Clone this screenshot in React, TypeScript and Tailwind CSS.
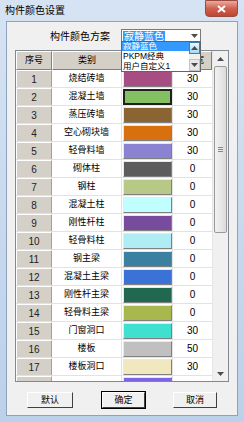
const FONT = { fontFamily: '"Liberation Sans", "Noto Sans CJK SC", sans-serif' };

const rows: [string, string, number | string][] = [
  ['烧结砖墙', '#a84d84', 30],
  ['混凝土墙', '#84c062', 30],
  ['蒸压砖墙', '#8a6432', 30],
  ['空心砌块墙', '#d9700e', 30],
  ['轻骨料墙', '#8c82d2', 30],
  ['砌体柱', '#5c5c5c', 0],
  ['钢柱', '#b8c886', 0],
  ['混凝土柱', '#c0ffff', 0],
  ['刚性杆柱', '#784c9c', 0],
  ['轻骨料柱', '#b0ecf4', 0],
  ['钢主梁', '#3a80a0', 0],
  ['混凝土主梁', '#3a72d8', 0],
  ['刚性杆主梁', '#206850', 0],
  ['轻骨料主梁', '#a8b84e', 0],
  ['门窗洞口', '#40e0d0', 30],
  ['楼板', '#c0c0c0', 50],
  ['楼板洞口', '#f2e8c0', 30],
  ['', '#7c64e4', ''],
];

function Arrow({ up }: { up?: boolean }) {
  return (
    <svg width="7" height="4" viewBox="0 0 7 4">
      <path d={up ? 'M0 4 L3.5 0 L7 4 Z' : 'M0 0 L3.5 4 L7 0 Z'} fill="#4d4d4d" />
    </svg>
  );
}

function HeadCell({ w, children }: { w: string; children?: React.ReactNode }) {
  return (
    <div className={`${w} h-full flex items-center justify-center bg-[#d4d0c8] border-t border-l border-t-white border-l-white border-r border-b border-r-[#808080] border-b-[#808080] text-[9px] text-black`}>
      {children}
    </div>
  );
}

function Btn({ w, label, focus }: { w: string; label: string; focus?: boolean }) {
  return (
    <button className={`${w} h-[16px] flex items-center justify-center text-[9px] leading-none text-black bg-[#f0f0f0] border border-t-white border-l-white border-r-[#404040] border-b-[#404040] ${focus ? 'outline outline-1 outline-black' : ''}`}>
      {label}
    </button>
  );
}

export default function App() {
  return (
    <div style={FONT} className="w-[244px] h-[422px] relative bg-gradient-to-b from-[#d6e3f3] to-[#bcd0ea] overflow-hidden">
      {/* Title bar */}
      <div className="h-[21px] flex items-center pl-[5px] text-[10px] text-black">构件颜色设置</div>
      <div className="absolute right-[6px] top-0 w-[33px] h-[17px] rounded-b-[4px] border border-[#9a4a3e] bg-gradient-to-b from-[#eaaa9e] via-[#d0604f] to-[#c04530] flex items-center justify-center">
        <svg width="9" height="8" viewBox="0 0 9 8">
          <path d="M1 1 L8 7 M8 1 L1 7" stroke="#ffffff" strokeWidth="2" />
        </svg>
      </div>

      {/* Client area */}
      <div className="mx-[6px] h-[395px] bg-[#f0f0f0] border border-[#8da2bd] relative">
        <div className="h-[28px] flex items-center">
          <span className="ml-[43px] w-[71px] text-[10px] text-black">构件颜色方案</span>
          <div className="w-[80px] h-[14px] bg-white border border-[#7a7a7a] flex items-center pl-[1px]">
            <span className="bg-[#3399ff] text-white text-[10px] leading-[11px] px-[1px]">寂静蓝色</span>
            <div className="ml-auto mr-[2px]">
              <Arrow />
            </div>
          </div>
        </div>

        {/* Table */}
        <div className="ml-[8px] w-[214px] h-[332px] border border-[#828790] bg-white flex">
          <div className="w-[196px] flex flex-col overflow-hidden">
            <div className="h-[19px] shrink-0 flex">
              <HeadCell w="w-[36px]">序号</HeadCell>
              <HeadCell w="w-[70px]">类别</HeadCell>
              <HeadCell w="w-[51px]" />
              <HeadCell w="w-[39px]">
                <span className="pl-[14px]">宽</span>
              </HeadCell>
            </div>
            {rows.map(([name, color, width], i) => (
              <div key={i} className="h-[18px] shrink-0 flex border-b border-[#e2e2e2]">
                <div className="w-[36px] h-full flex items-center justify-center bg-[#d4d0c8] border-t border-l border-t-white border-l-white border-r border-r-[#a0a0a0] text-[10px] text-[#222]">
                  {name ? i + 1 : ''}
                </div>
                <div className="w-[70px] h-full flex items-center justify-center text-[9px] text-black border-r border-[#e2e2e2]">
                  {name}
                </div>
                <div className="w-[51px] h-full flex items-center justify-center border-r border-[#e2e2e2]">
                  <div
                    className={`w-[49px] h-[16px] ${i === 1 ? 'border-2 border-[#202020]' : 'border border-t-[#e8e8e8] border-l-[#e8e8e8] border-r-[#808080] border-b-[#808080]'}`}
                    style={{ backgroundColor: color }}
                  />
                </div>
                <div className="w-[39px] h-full flex items-center justify-center text-[10px] text-black">{width}</div>
              </div>
            ))}
          </div>
          {/* Scrollbar */}
          <div className="w-[16px] h-full bg-[#f0f0f0] border-l border-[#e6e6e6] flex flex-col items-center">
            <div className="h-[15px] w-full flex items-center justify-center">
              <Arrow up />
            </div>
            <div className="w-[13px] h-[167px] rounded-[2px] border border-[#9a9a9a] bg-gradient-to-r from-[#f2f2f2] to-[#dcdcdc] flex flex-col items-center justify-center gap-[1px]">
              <div className="w-[5px] h-px bg-[#888]" />
              <div className="w-[5px] h-px bg-[#888]" />
              <div className="w-[5px] h-px bg-[#888]" />
            </div>
            <div className="flex-1" />
            <div className="h-[15px] w-full flex items-center justify-center">
              <Arrow />
            </div>
          </div>
        </div>

        {/* Buttons */}
        <div className="mt-[10px] flex">
          <div className="ml-[20px]"><Btn w="w-[46px]" label="默认" /></div>
          <div className="ml-[29px]"><Btn w="w-[43px]" label="确定" focus /></div>
          <div className="ml-[28px]"><Btn w="w-[44px]" label="取消" /></div>
        </div>

        {/* Dropdown list */}
        <div className="absolute left-[114px] top-[19px] w-[80px] h-[31px] bg-white border border-[#646464] flex">
          <div className="flex-1 flex flex-col text-[8.5px] text-black overflow-hidden">
            <div className="h-[9px] leading-[9px] bg-[#3399ff] text-white pl-[1px]">寂静蓝色</div>
            <div className="h-[10px] leading-[10px] pl-[1px]">PKPM经典</div>
            <div className="h-[10px] leading-[10px] pl-[1px]">用户自定义1</div>
          </div>
          <div className="w-[11px] flex flex-col bg-[#f0f0f0]">
            <div className="h-[12px] border border-[#3c7fb1] bg-gradient-to-b from-[#eaf6fd] to-[#a7d9f5] flex items-center justify-center">
              <Arrow up />
            </div>
            <div className="flex-1" />
            <div className="h-[12px] border border-[#c5c5c5] bg-[#e8e8e8] flex items-center justify-center">
              <Arrow />
            </div>
          </div>
        </div>
      </div>
    </div>
  );
}
